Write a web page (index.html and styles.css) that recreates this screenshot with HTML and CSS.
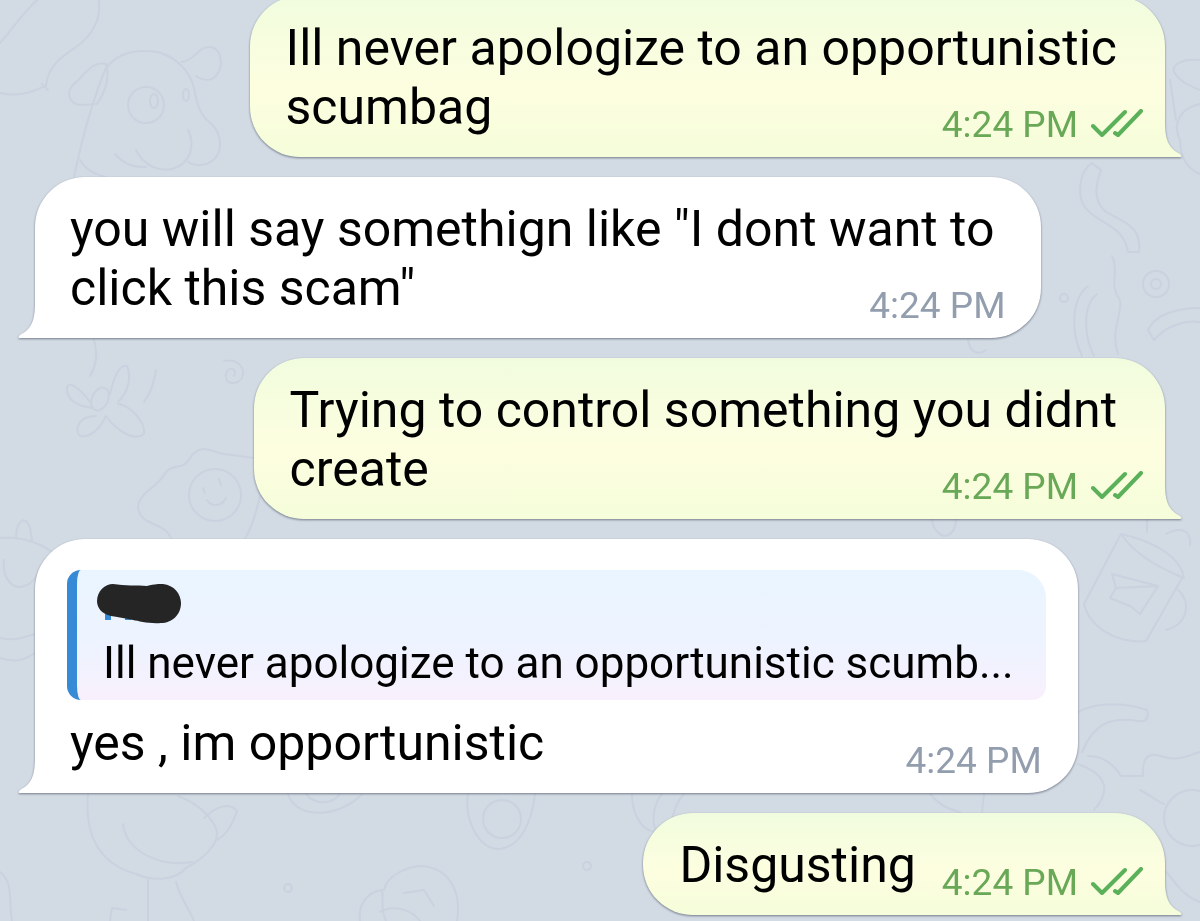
FILE: index.html
```html
<!DOCTYPE html>
<html lang="en">
   <head>
      <meta charset="utf-8">
      <meta name="viewport" content="width=device-width, initial-scale=1.0"/>
      <title>Chat</title>
      <link rel="stylesheet" href="styles.css">
   </head>
   <body>
      <!--doodle wallpaper-->
      <svg class="wallpaper" viewBox="0 0 1200 921" preserveAspectRatio="xMidYMid slice" aria-hidden="true">
         <!--balloon-->
         <path d="M0 43C15 26 26 8 42 -4M98 -4C103 18 92 36 76 47C60 58 48 66 46 86C34 90 22 98 0 93M42 84l6 6"/>
         <!--cow-->
         <path d="M106 68C118 52 138 49 158 52C178 58 190 72 194 88C197 104 200 114 208 121C224 132 225 158 206 164C200 166 192 165 188 162M106 68C94 96 84 130 74 177M106 64C92 60 84 76 72 86C66 94 70 104 80 105L97 104C106 90 110 78 106 64M182 62C196 60 198 46 210 47C222 48 224 66 216 76C210 82 202 80 196 76M188 130C196 146 190 164 172 169C154 172 142 162 136 150M115 154C122 162 132 168 146 167M80 160C86 170 94 174 106 177"/>
         <circle cx="146" cy="105" r="18"/>
         <ellipse cx="154" cy="101" rx="4" ry="7"/>
         <ellipse cx="186" cy="95" rx="3" ry="6"/>
         <!--flower-->
         <path d="M90 402C80 388 68 380 67 388C66 400 78 406 92 408M110 394C114 376 120 364 127 366C132 378 128 392 118 402M118 404C132 406 146 424 144 434C134 442 116 430 106 416M96 416C78 416 74 430 80 436C92 438 100 428 106 416M94 340C98 356 96 366 90 376M156 370C154 384 150 394 144 402"/>
         <ellipse cx="100" cy="399" rx="8" ry="12" transform="rotate(25 100 399)"/>
         <path d="M224 361C238 358 246 368 242 378C236 386 224 384 226 374C228 366 238 368 234 376"/>
         <!--fried egg-->
         <path d="M172 540C164 520 142 528 138 508C138 492 158 488 166 472C172 464 184 470 190 458C200 442 212 452 224 454L254 458M260 496C256 514 252 528 244 540"/>
         <circle cx="215" cy="495" r="26"/>
         <path d="M203 488l2 5M219 479l2 6M207 500C212 508 222 506 226 498"/>
         <!--fruit-->
         <path d="M0 538C24 536 44 544 60 558M16 538C16 524 24 512 30 528L32 540M4 560C2 580 14 590 24 586C34 584 40 572 46 560M0 638C16 642 26 636 36 634M0 658C18 664 28 658 36 652"/>
         <!--bird-->
         <path d="M88 794C84 836 100 864 136 874C154 882 176 880 186 868C212 854 220 838 216 828C208 812 194 802 178 796M123 824C126 850 158 868 192 862M204 818C216 806 230 802 237 811C232 826 226 836 216 840M148 880V921M176 882C180 898 190 910 194 921M110 921L112 908L126 910"/>
         <path d="M0 872C14 884 8 896 12 921M288 794C296 820 340 818 362 794M306 794C316 806 332 804 340 794"/>
         <circle cx="288" cy="888" r="4"/>
         <!--ring and mushroom-->
         <path d="M468 794C464 822 480 850 500 849C522 846 532 820 535 794"/>
         <circle cx="502" cy="819" r="19"/>
         <path d="M384 890C386 876 408 866 422 866C448 868 462 890 457 921M360 921C358 906 366 892 382 890C384 898 380 910 386 921M380 912C394 904 412 910 420 921M404 893L424 890L434 906"/>
         <circle cx="587" cy="866" r="4"/>
         <path d="M632 794C632 810 638 828 654 832M662 794C652 806 652 822 656 832M684 794C676 802 674 812 672 820"/>
         <!--right side-->
         <path d="M1200 60C1180 58 1172 66 1174 72C1180 82 1190 86 1200 90M1200 104C1180 108 1172 124 1180 140C1180 160 1190 170 1200 174M1170 80L1176 120"/>
         <path d="M1092 163C1078 172 1078 196 1084 206C1096 224 1124 224 1128 252L1139 252C1142 226 1124 222 1106 212C1092 200 1096 184 1101 170ZM1088 286C1072 298 1070 330 1082 356M1097 294C1082 306 1084 336 1094 356M1112 256C1120 272 1108 284 1120 300C1122 318 1110 330 1118 354M1200 308C1174 308 1154 316 1148 330L1154 340C1166 326 1184 320 1200 322"/>
         <circle cx="1156" cy="284" r="13"/>
         <circle cx="1156" cy="284" r="5"/>
         <circle cx="1064" cy="298" r="4"/>
         <path d="M968 340C970 352 978 356 986 350"/>
         <!--mug-->
         <path d="M1121 534C1148 540 1180 554 1184 578C1160 568 1136 556 1121 534L1084 604C1090 628 1118 644 1146 641L1182 578M1178 590C1192 602 1188 624 1166 630M1112 574L1158 586L1140 614L1130 606L1110 598L1116 588ZM1116 588L1158 586M1147 519V532M1166 534C1180 526 1192 530 1190 545"/>
         <!--plant-->
         <path d="M1078 712C1100 700 1130 704 1147 710C1150 720 1144 722 1138 721C1110 716 1094 724 1082 752M1088 756C1106 756 1116 768 1121 776H1143C1142 758 1148 752 1160 756C1178 762 1186 756 1200 752M1078 764C1106 774 1112 790 1094 810M1140 790C1152 796 1158 802 1164 804"/>
         <circle cx="1192" cy="818" r="28"/>
         <path d="M932 519C932 528 938 534 944 536M956 519C956 530 950 536 944 536M930 794C940 806 950 810 960 812M984 794L982 812M1166 872C1176 882 1180 894 1200 902"/>
      </svg>

      <main class="chat">
         <article class="bubble out">
            <p class="text">Ill never apologize to an opportunistic<br>scumbag</p>
            <div class="meta">
               <time datetime="16:24">4:24 PM</time>
               <svg class="checks" viewBox="0 0 52 28" role="img" aria-label="Read"><path d="M2 17L11 26L34 3M24 24L27 26L50 2"/></svg>
            </div>
            <svg class="tail" viewBox="0 0 18 36" aria-hidden="true"><path d="M0 0H1C1 20 5 27 16 33Q19 36 16 36H0Z"/></svg>
         </article>

         <article class="bubble in">
            <p class="text">you will say somethign like "I dont want to<br>click this scam"</p>
            <div class="meta">
               <time datetime="16:24">4:24 PM</time>
            </div>
            <svg class="tail" viewBox="0 0 18 36" aria-hidden="true"><path d="M0 0H1C1 20 5 27 16 33Q19 36 16 36H0Z"/></svg>
         </article>

         <article class="bubble out">
            <p class="text">Trying to control something you didnt<br>create</p>
            <div class="meta">
               <time datetime="16:24">4:24 PM</time>
               <svg class="checks" viewBox="0 0 52 28" role="img" aria-label="Read"><path d="M2 17L11 26L34 3M24 24L27 26L50 2"/></svg>
            </div>
            <svg class="tail" viewBox="0 0 18 36" aria-hidden="true"><path d="M0 0H1C1 20 5 27 16 33Q19 36 16 36H0Z"/></svg>
         </article>

         <article class="bubble in reply">
            <blockquote class="quote">
               <!--sender name, scribbled over-->
               <svg class="scribble" viewBox="0 0 84 40" aria-hidden="true">
                  <path class="name" d="M8 30h6v6H8zM28 32h6v4h-6z"/>
                  <path d="M0 17C0 7 8 0 16 0C28 2 40 1 50 2C58 0 62 0 66 0C77 1 84 10 84 19C84 31 75 39 64 39C52 40 42 37 36 36C28 34 20 33 14 32C5 30 0 24 0 17Z"/>
               </svg>
               <p class="quote-text">Ill never apologize to an opportunistic scumb...</p>
            </blockquote>
            <p class="text">yes , im opportunistic</p>
            <div class="meta">
               <time datetime="16:24">4:24 PM</time>
            </div>
            <svg class="tail" viewBox="0 0 18 36" aria-hidden="true"><path d="M0 0H1C1 20 5 27 16 33Q19 36 16 36H0Z"/></svg>
         </article>

         <article class="bubble out short">
            <p class="text">Disgusting</p>
            <div class="meta">
               <time datetime="16:24">4:24 PM</time>
               <svg class="checks" viewBox="0 0 52 28" role="img" aria-label="Read"><path d="M2 17L11 26L34 3M24 24L27 26L50 2"/></svg>
            </div>
            <svg class="tail" viewBox="0 0 18 36" aria-hidden="true"><path d="M0 0H1C1 20 5 27 16 33Q19 36 16 36H0Z"/></svg>
         </article>
      </main>
   </body>
</html>
```
FILE: styles.css
```css
* {
box-sizing: border-box;
}
body {
margin: 0;
background-color: #d2dae4;
font-family: Roboto, "Liberation Sans", sans-serif;
color: #000;
overflow: hidden;
}
p, blockquote {
margin: 0;
}
.wallpaper {
position: fixed;
top: 0;
left: 0;
width: 100%;
height: 100%;
fill: none;
stroke: #cad2df;
stroke-width: 2;
stroke-linecap: round;
stroke-linejoin: round;
}
/* newest message sits at the bottom, older ones run off the top */
.chat {
position: relative;
display: flex;
flex-direction: column;
justify-content: flex-end;
gap: 20px;
height: 100vh;
padding: 0 35px 6px;
}
.bubble {
position: relative;
flex: none;
display: grid;
padding: 23px 36px 20px;
border-radius: 50px;
filter: drop-shadow(0 1px 1px rgba(90, 100, 115, 0.8));
}
.out {
align-self: flex-end;
padding-right: 22px;
border-bottom-right-radius: 0;
background: linear-gradient(#f1fcde, #fdfee0 55%, #f5fdda);
}
.in {
align-self: flex-start;
padding-left: 35px;
border-bottom-left-radius: 0;
background: #fff;
}
.text {
grid-area: 1 / 1;
font-size: 50px;
line-height: 59px;
white-space: nowrap;
}
.out .text {
padding-right: 26px;
}
.in .text {
padding-right: 11px;
}
/* time shares the cell with the text, just below its last baseline */
.meta {
grid-area: 1 / 1;
place-self: end;
display: flex;
align-items: center;
gap: 13px;
margin-bottom: -10px;
font-size: 37px;
line-height: 44px;
color: #929dae;
}
.out .meta {
color: #68a856;
}
.checks {
width: 52px;
height: 28px;
margin-bottom: 4px;
fill: none;
stroke: #5bb05a;
stroke-width: 4;
stroke-linecap: round;
stroke-linejoin: round;
}
.tail {
position: absolute;
bottom: 0;
width: 18px;
height: 36px;
}
.out .tail {
left: calc(100% - 1px);
fill: #f5fdda;
}
.in .tail {
right: calc(100% - 1px);
fill: #fff;
transform: scaleX(-1);
}
/* message with a quoted one above it */
.reply {
padding-top: 31px;
}
.reply .text, .reply .meta {
grid-row: 2;
}
.quote {
grid-area: 1 / 1;
height: 130px;
margin: 0 -4px 14px -3px;
padding: 14px 32px 0 26px;
border-left: 10px solid #378bd6;
border-radius: 14px 28px 14px 14px;
background: linear-gradient(#e9f5ff, #eef3ff 60%, #f8f0fc);
}
.scribble {
display: block;
width: 84px;
height: 40px;
margin-left: -6px;
fill: #252525;
}
.scribble .name {
fill: #378bd6;
}
.quote-text {
font-size: 44px;
line-height: 52px;
margin-top: 13px;
white-space: nowrap;
}
.short {
grid-template-columns: auto auto;
}
.short .meta {
grid-column: 2;
}
```
